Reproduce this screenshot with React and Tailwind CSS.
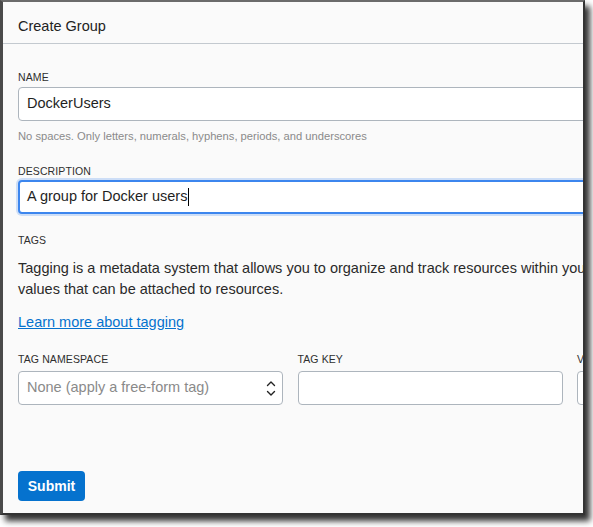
function Label({ children }) {
  return (
    <p className="text-[10.5px] leading-[12px] font-medium tracking-[0.01em] text-[#2f2f2f] uppercase">
      {children}
    </p>
  );
}

function UpDown() {
  return (
    <svg width="10" height="17" viewBox="0 0 10 17" fill="none" stroke="#222" strokeWidth="1.4" strokeLinecap="round" strokeLinejoin="round">
      <path d="M1.5 5.5 5 2 8.5 5.5" />
      <path d="M1.5 11.5 5 15 8.5 11.5" />
    </svg>
  );
}

export default function App() {
  return (
    <div className="w-[593px] h-[527px] bg-white overflow-hidden font-['Liberation_Sans',Arial,sans-serif]">
      <div className="w-[585px] h-[515px] bg-[#fafafa] border-t-2 border-l-[3px] border-r-2 border-b-2 border-t-[#6b6b6b] border-l-[#4a4a4a] border-r-[#333] border-b-[#333] shadow-[5px_6px_6px_rgba(0,0,0,0.8)] overflow-hidden">
        <div className="w-[900px]">
          <div className="h-[42px] px-[15px] pt-[16px] border-b border-[#c3c9cf]">
            <h1 className="text-[14.5px] leading-[17px] text-[#222]">Create Group</h1>
          </div>

          <div className="px-[15px] pt-[27px]">
            <div className="w-[700px]">
              <Label>Name</Label>
              <div className="mt-[4px] h-[34px] w-full rounded-[4px] border border-[#adb5bd] bg-white flex items-center px-[8px] text-[14.5px] text-[#1f1f1f]">
                DockerUsers
              </div>
              <p className="mt-[9px] text-[11.2px] leading-[12px] text-[#8a8a8a]">
                No spaces. Only letters, numerals, hyphens, periods, and underscores
              </p>

              <div className="mt-[23px]">
                <Label>Description</Label>
              </div>
              <div className="mt-[3px] h-[34px] w-full rounded-[4px] border-2 border-[#3c86ee] shadow-[0_0_0_2px_rgba(120,170,240,0.35)] bg-white flex items-center px-[7px] text-[14.5px] text-[#1f1f1f]">
                A group for Docker users
                <span className="inline-block w-px h-[18px] bg-black ml-px" />
              </div>
            </div>

            <div className="mt-[20px]">
              <Label>Tags</Label>
            </div>
            <div className="mt-[12px] text-[14.5px] leading-[21px] text-[#2a2a2a] whitespace-nowrap">
              <p>Tagging is a metadata system that allows you to organize and track resources within your tenancy. Tags are composed of keys and</p>
              <p>values that can be attached to resources.</p>
            </div>
            <a href="#" className="mt-[12px] inline-block text-[14.5px] leading-[20px] text-[#0572ce] underline">
              Learn more about tagging
            </a>

            <div className="mt-[19px] flex gap-[14.5px]">
              <div className="w-[265px] shrink-0">
                <Label>Tag Namespace</Label>
                <div className="mt-[6px] h-[34px] rounded-[4px] border border-[#adb5bd] bg-white flex items-center justify-between pl-[8px] pr-[6px] text-[14.5px] text-[#8a8a8a]">
                  <span>None (apply a free-form tag)</span>
                  <UpDown />
                </div>
              </div>
              <div className="w-[265px] shrink-0">
                <Label>Tag Key</Label>
                <div className="mt-[6px] h-[34px] rounded-[4px] border border-[#adb5bd] bg-white" />
              </div>
              <div className="w-[265px] shrink-0">
                <Label>Value</Label>
                <div className="mt-[6px] h-[34px] rounded-[4px] border border-[#adb5bd] bg-white" />
              </div>
            </div>

            <button className="mt-[66px] h-[30px] w-[67px] rounded-[4px] bg-[#0572ce] text-white text-[14px] font-semibold">
              Submit
            </button>
          </div>
        </div>
      </div>
    </div>
  );
}
